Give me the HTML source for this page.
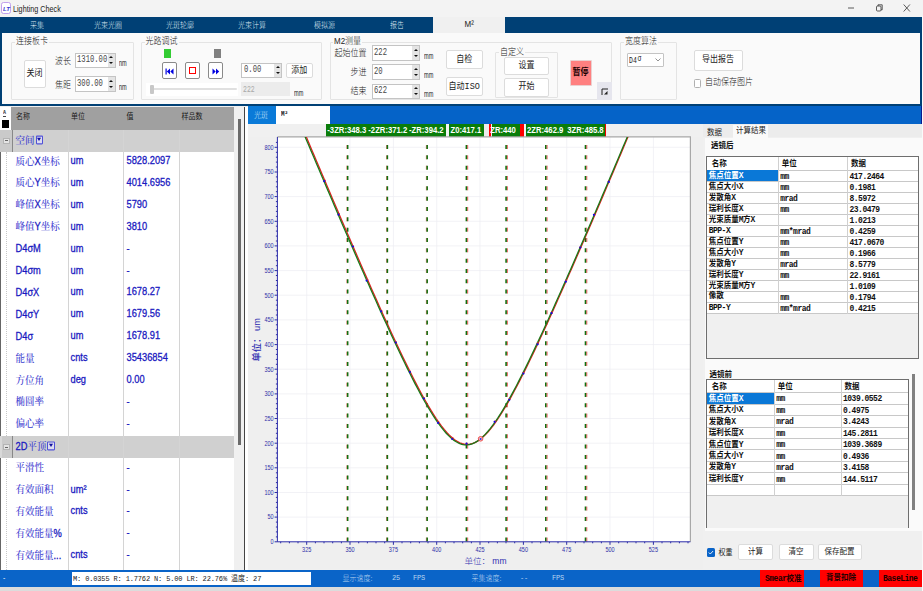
<!DOCTYPE html>
<html><head><meta charset="utf-8">
<style>
*{box-sizing:border-box;margin:0;padding:0}
html,body{width:923px;height:591px;overflow:hidden;background:#f0f0f0}
body{position:relative;font-family:"Liberation Sans","Noto Sans CJK SC",sans-serif;font-size:8px;color:#222;line-height:1;font-weight:300}
.a{position:absolute}
.t{position:absolute;white-space:nowrap;line-height:1;transform:scaleY(1.12);transform-origin:0 50%}
#title{left:0;top:0;width:923px;height:17px;background:#f3f3f3}
#menu{left:0;top:16.500px;width:922px;height:17px;background:#004075}
#menu .t{color:#dfe8f2;font-size:7px;top:5px}
#tool{left:0;top:33px;width:922px;height:73.200px;background:#fafafa;border:2px solid #004075;border-top:none;border-bottom-width:2.200px}
.gb{position:absolute;border:1px solid #e4e4e4;border-radius:1px}
.gl{position:absolute;white-space:nowrap;font-size:8px;background:#fafafa;color:#222;line-height:1;padding:0 1px}
.btn{position:absolute;border:1px solid #dcdcdc;border-radius:2px;background:#fff;text-align:center;font-size:8px;color:#222;white-space:nowrap}
.sp{position:absolute;border:1px solid #c4c4c4;background:#fff;font-family:"Liberation Mono",monospace;font-size:7.6px;color:#222;white-space:nowrap}
.sp span{position:absolute;left:1.500px;top:1.500px;font-size:10px;transform:scaleX(0.72);transform-origin:0 0;color:#484848}
.sp i{position:absolute;right:0;top:0;bottom:0;width:7px;background:#e4e4e4}
.sp i:before{content:"";position:absolute;left:1.500px;top:2.800px;border:2px solid transparent;border-bottom:2.800px solid #111;border-top:none}
.sp i:after{content:"";position:absolute;left:1.500px;bottom:2.800px;border:2px solid transparent;border-top:2.800px solid #111;border-bottom:none}
.u{position:absolute;font-family:"Liberation Mono",monospace;font-size:9.500px;color:#222;transform:scaleX(0.68);transform-origin:0 0;line-height:1;white-space:nowrap}

.hd{font-size:7px;color:#181818;font-weight:400}
.cn{font-family:"Liberation Sans","Noto Serif CJK SC",serif;font-size:9.500px;color:#3c3cd0;font-weight:500}
.cn .en2{font-family:"Liberation Sans",sans-serif;font-size:9.300px;color:#1818c0;font-weight:400;-webkit-text-stroke:0.250px #1818c0}
.en{font-family:"Liberation Sans",sans-serif;font-size:9.300px;color:#1818c0;font-weight:400;-webkit-text-stroke:0.250px #1818c0}
.dd{display:inline-block;width:7.700px;height:8.500px;border:1px solid #5050d8;border-radius:1px;margin-left:1px;position:relative;top:0.500px;background:#dcdcf0}
.dd:after{content:"";position:absolute;left:0.800px;top:1.800px;border:2px solid transparent;border-top:3.200px solid #1010a0;border-bottom:none}
.zl{font-family:"Liberation Sans",sans-serif;font-weight:bold;font-size:7.700px;color:#fff}
.rb{font-weight:bold;color:#111;font-family:"Liberation Sans","Noto Sans CJK SC",sans-serif}
.rc{font-size:7.500px;font-weight:bold;font-family:"Liberation Mono","Noto Sans CJK SC",sans-serif}
.rl{font-family:"Liberation Mono",monospace;font-size:8px;letter-spacing:-0.500px;font-weight:bold}
.rm{font-family:"Liberation Mono",monospace;font-size:8px;letter-spacing:-0.500px;font-weight:bold;color:#111}
.st{font-family:"Liberation Mono",monospace;font-size:7px;letter-spacing:-0.150px;font-weight:400}
.sc{font-size:7px;color:#b8d4f0}
.sr{font-size:7.500px;font-weight:bold;color:#200;font-family:"Liberation Mono","Noto Sans CJK SC",sans-serif}
.btn b{display:inline-block;font-weight:normal;transform:scaleY(1.12)}
.gl{transform:scaleY(1.12);transform-origin:0 50%}
.un{position:absolute;font-family:"Liberation Sans",sans-serif;font-size:9px;color:#222;transform:scaleX(0.62);transform-origin:0 0;line-height:1;white-space:nowrap}
</style></head><body>
<div id="title" class="a">
 <svg class="a" style="left:1px;top:2px" width="10" height="12" viewBox="0 0 10 12"><rect x="0.5" y="0.5" width="9" height="11" rx="2" fill="#fff" stroke="#b48ae8" stroke-width="0.8"/><text x="2" y="8.5" font-size="6" font-style="italic" font-weight="bold" fill="#3a3ad0" font-family="Liberation Sans, sans-serif">LT</text></svg>
 <div class="t" style="left:13px;top:4.500px;font-size:8.500px;color:#222;transform:scaleX(0.85);transform-origin:0 0">Lighting Check</div>
 <svg class="a" style="left:840px;top:0" width="83" height="17" viewBox="0 0 83 17"><g stroke="#333" stroke-width="0.8" fill="none"><path d="M8 8h6"/><rect x="36.5" y="6" width="4.5" height="5" rx="1"/><path d="M38 6v-1.2h4.2v5h-1.2"/><path d="M63.700 4.500l6.200 7M69.900 4.500l-6.200 7"/></g></svg>
</div>
<div id="menu" class="a">
 <div class="t" style="left:30px">采集</div>
 <div class="t" style="left:94px">光束光圈</div>
 <div class="t" style="left:166px">光斑轮廓</div>
 <div class="t" style="left:238px">光束计算</div>
 <div class="t" style="left:314px">模拟源</div>
 <div class="t" style="left:390px">报告</div>
 <div class="a" style="left:433px;top:0.500px;width:72px;height:16.500px;background:#f0f0f0"></div>
 <div class="t" style="left:464.500px;top:4.500px;color:#222;font-size:8px;font-weight:400">M²</div>
</div>
<div id="tool" class="a"></div>


<!-- TOOLBAR -->
<div class="gb" style="left:11px;top:41.500px;width:122.500px;height:58px"></div>
<div class="gl" style="left:15px;top:37.8px">连接板卡</div>
<div class="btn" style="left:23.500px;top:59.500px;width:22px;height:28px;line-height:26px"><b>关闭</b></div>
<div class="t" style="left:55px;top:58px;font-size:8px">波长</div>
<div class="t" style="left:55px;top:82px;font-size:8px">焦距</div>
<div class="sp" style="left:74.500px;top:52.500px;width:41px;height:15.500px"><span>1310.00</span><i></i></div>
<div class="sp" style="left:74.500px;top:76px;width:41px;height:15.500px"><span>300.00</span><i></i></div>
<div class="un" style="left:119px;top:58.5px">nm</div>
<div class="un" style="left:119px;top:82.5px">nm</div>

<div class="gb" style="left:141px;top:42px;width:180.500px;height:57.500px"></div>
<div class="gl" style="left:144.500px;top:37.8px">光路调试</div>
<div class="a" style="left:163.500px;top:49px;width:7.500px;height:9px;background:#33cc33"></div>
<div class="a" style="left:213.500px;top:49px;width:7.500px;height:9px;background:#808080"></div>
<div class="btn" style="left:161.500px;top:61.500px;width:15.500px;height:17.500px;border-color:#8a8a8a"><svg class="a" style="left:2.500px;top:5px" width="9" height="7" viewBox="0 0 9 7"><path d="M0.500 0.500h1.200v6h-1.200zM5 0.500v6l-3.200-3zM8.500 0.500v6l-3.200-3z" fill="#0000e0"/></svg></div>
<div class="btn" style="left:184.500px;top:61.500px;width:15.500px;height:17.500px;border-color:#8a8a8a"><div class="a" style="left:3.500px;top:4.500px;width:7px;height:7px;border:1px solid #f00"></div></div>
<div class="btn" style="left:207.500px;top:61.500px;width:15.500px;height:17.500px;border-color:#8a8a8a"><svg class="a" style="left:3.500px;top:5px" width="8" height="7" viewBox="0 0 8 7"><path d="M0.500 0.500v6l3.200-3zM4 0.500v6l3.200-3z" fill="#0000e0"/></svg></div>
<div class="sp" style="left:241px;top:62.500px;width:41px;height:15px"><span>0.00</span><i></i></div>
<div class="btn" style="left:285.500px;top:62.500px;width:27.500px;height:15px;line-height:13px"><b>添加</b></div>
<div class="a" style="left:146px;top:83px;width:92px;height:13px;background:#fff"></div>
<div class="a" style="left:150px;top:88px;width:87px;height:2px;background:#e0e0e0;border-radius:1px"></div>
<div class="a" style="left:150px;top:85px;width:4px;height:9px;background:#c8c8c8;border-radius:1px"></div>
<div class="a" style="left:241px;top:81.500px;width:49px;height:14.500px;background:#ececec"></div>
<div class="u" style="left:243px;top:85.0px;color:#a8a8a8">222</div>
<div class="un" style="left:294px;top:88.5px">mm</div>

<div class="gb" style="left:330px;top:41.500px;width:282px;height:58px"></div>
<div class="gl" style="left:333px;top:37.8px">M2测量</div>
<div class="t" style="left:334.500px;top:49.500px;font-size:8px">起始位置</div>
<div class="t" style="left:350.500px;top:68.500px;font-size:8px">步进</div>
<div class="t" style="left:350.500px;top:87.500px;font-size:8px">结束</div>
<div class="sp" style="left:371.500px;top:45px;width:48.500px;height:15.500px"><span>222</span><i></i></div>
<div class="sp" style="left:371.500px;top:64px;width:48.500px;height:15.500px"><span>20</span><i></i></div>
<div class="sp" style="left:371.500px;top:83.500px;width:48.500px;height:15.500px"><span>622</span><i></i></div>
<div class="un" style="left:424px;top:51.5px">mm</div>
<div class="un" style="left:424px;top:70.5px">mm</div>
<div class="un" style="left:424px;top:89.5px">mm</div>
<div class="btn" style="left:445.500px;top:49.500px;width:37.500px;height:19px;line-height:17px"><b>自检</b></div>
<div class="btn" style="left:445.500px;top:76.500px;width:37.500px;height:19px;line-height:17px"><b>自动</b><span style="font-family:'Liberation Mono',monospace;font-size:8.500px">ISO</span></div>
<div class="gb" style="left:494.500px;top:51.500px;width:63.500px;height:46px"></div>
<div class="gl" style="left:499px;top:48.8px">自定义</div>
<div class="btn" style="left:504px;top:56.500px;width:45px;height:18.500px;line-height:16.500px"><b>设置</b></div>
<div class="btn" style="left:504px;top:78px;width:45px;height:18.500px;line-height:16.500px"><b>开始</b></div>
<div class="a" style="left:569.500px;top:60px;width:22.500px;height:26px;background:#ff8080;border:1px solid #ead0d0;border-radius:1px"></div>
<div class="t" style="left:572.500px;top:69px;font-size:8px;font-weight:bold;color:#1a0000">暂停</div>
<div class="a" style="left:596.500px;top:82px;width:15px;height:17.500px;background:#e6e6ee"></div>
<svg class="a" style="left:601px;top:87.500px" width="8" height="8" viewBox="0 0 8 8"><path d="M1 7V1h6" fill="none" stroke="#222" stroke-width="1"/><path d="M6.500 6.500h-3.500l3.500-3.500z" fill="#222"/></svg>

<div class="gb" style="left:620px;top:42px;width:56.500px;height:57.500px"></div>
<div class="gl" style="left:624px;top:37.8px">宽度算法</div>
<div class="a" style="left:627px;top:52.500px;width:37px;height:14.500px;border:1px solid #c4c4c4;background:#fff;border-radius:1px"></div>
<div class="u" style="left:629px;top:55px">D4<span style="font-family:'Liberation Sans',sans-serif;position:relative;top:-2px;left:1px">σ</span></div>
<svg class="a" style="left:655px;top:58px" width="6" height="4" viewBox="0 0 6 4"><path d="M0.500 0.500l2.500 2.500l2.500-2.500" fill="none" stroke="#777" stroke-width="0.800"/></svg>
<div class="btn" style="left:693.500px;top:50px;width:49px;height:20.500px;line-height:18.500px"><b>导出报告</b></div>
<div class="a" style="left:693.500px;top:79px;width:7.500px;height:8.500px;border:1px solid #b0b0b0;border-radius:1.500px;background:#fff"></div>
<div class="t" style="left:705px;top:79px;font-size:8px">自动保存图片</div>

<!-- LEFT PANEL -->
<div class="a" style="left:0;top:106.500px;width:234px;height:463px;background:#fff;overflow:hidden" id="left">
<div class="a" style="left:11px;top:0;width:223px;height:23.500px;background:#a0a0a0"></div>
<div class="t hd" style="left:16px;top:6px">名称</div>
<div class="t hd" style="left:71px;top:6px">单位</div>
<div class="t hd" style="left:126.5px;top:6px">值</div>
<div class="t hd" style="left:181.5px;top:6px">样品数</div>
<div class="t" style="left:3px;top:4px;font-size:5px;color:#333;font-family:'Liberation Mono',monospace;font-weight:bold">A</div><div class="a" style="left:2.800px;top:9.300px;width:3.600px;height:1px;background:#444"></div>
<div class="a" style="left:2px;top:13.500px;width:7px;height:8px;background:#000"></div>
<div class="a" style="left:6px;top:45px;width:0;height:420px;border-left:1px dotted #c8c8c8"></div>
<div class="a" style="left:11px;top:23.5px;width:223px;height:21.5px;background:#d0d0d0"></div>
<div class="a" style="left:0;top:23.5px;width:12.500px;height:21.5px;background:#cacaca;border-right:1px solid #888"></div>
<div class="a" style="left:3px;top:31.0px;width:6.500px;height:6.500px;border:1px solid #b4b4b4;background:#e4e4e4"></div><div class="a" style="left:5px;top:33.8px;width:2.500px;height:1px;background:#666"></div>
<div class="t cn" style="left:15.500px;top:28.5px">空间<span class="dd"></span></div>
<div class="t cn" style="left:15.500px;top:50.00px">质心<span class="en2">X</span>坐标</div>
<div class="t en" style="left:70.500px;top:50.50px">um</div>
<div class="t en" style="left:126.500px;top:50.50px">5828.2097</div>
<div class="t cn" style="left:15.500px;top:71.90px">质心<span class="en2">Y</span>坐标</div>
<div class="t en" style="left:70.500px;top:72.40px">um</div>
<div class="t en" style="left:126.500px;top:72.40px">4014.6956</div>
<div class="t cn" style="left:15.500px;top:93.80px">峰值<span class="en2">X</span>坐标</div>
<div class="t en" style="left:70.500px;top:94.30px">um</div>
<div class="t en" style="left:126.500px;top:94.30px">5790</div>
<div class="t cn" style="left:15.500px;top:115.70px">峰值<span class="en2">Y</span>坐标</div>
<div class="t en" style="left:70.500px;top:116.20px">um</div>
<div class="t en" style="left:126.500px;top:116.20px">3810</div>
<div class="t cn" style="left:15.500px;top:137.60px"><span class="en2">D4σM</span></div>
<div class="t en" style="left:70.500px;top:138.10px">um</div>
<div class="t en" style="left:126.500px;top:138.10px">-</div>
<div class="t cn" style="left:15.500px;top:159.50px"><span class="en2">D4σm</span></div>
<div class="t en" style="left:70.500px;top:160.00px">um</div>
<div class="t en" style="left:126.500px;top:160.00px">-</div>
<div class="t cn" style="left:15.500px;top:181.40px"><span class="en2">D4σX</span></div>
<div class="t en" style="left:70.500px;top:181.90px">um</div>
<div class="t en" style="left:126.500px;top:181.90px">1678.27</div>
<div class="t cn" style="left:15.500px;top:203.30px"><span class="en2">D4σY</span></div>
<div class="t en" style="left:70.500px;top:203.80px">um</div>
<div class="t en" style="left:126.500px;top:203.80px">1679.56</div>
<div class="t cn" style="left:15.500px;top:225.20px"><span class="en2">D4σ</span></div>
<div class="t en" style="left:70.500px;top:225.70px">um</div>
<div class="t en" style="left:126.500px;top:225.70px">1678.91</div>
<div class="t cn" style="left:15.500px;top:247.10px">能量</div>
<div class="t en" style="left:70.500px;top:247.60px">cnts</div>
<div class="t en" style="left:126.500px;top:247.60px">35436854</div>
<div class="t cn" style="left:15.500px;top:269.00px">方位角</div>
<div class="t en" style="left:70.500px;top:269.50px">deg</div>
<div class="t en" style="left:126.500px;top:269.50px">0.00</div>
<div class="t cn" style="left:15.500px;top:290.90px">椭圆率</div>
<div class="t en" style="left:126.500px;top:291.40px">-</div>
<div class="t cn" style="left:15.500px;top:312.80px">偏心率</div>
<div class="t en" style="left:126.500px;top:313.30px">-</div>
<div class="a" style="left:11px;top:329.7px;width:223px;height:21.9px;background:#d0d0d0"></div>
<div class="a" style="left:0;top:329.7px;width:12.500px;height:21.9px;background:#cacaca;border-right:1px solid #888"></div>
<div class="a" style="left:3px;top:337.2px;width:6.500px;height:6.500px;border:1px solid #b4b4b4;background:#e4e4e4"></div><div class="a" style="left:5px;top:340.0px;width:2.500px;height:1px;background:#666"></div>
<div class="t cn" style="left:15.500px;top:334.7px"><span class="en2">2D</span>平顶<span class="dd"></span></div>
<div class="t cn" style="left:15.500px;top:356.60px">平滑性</div>
<div class="t en" style="left:126.500px;top:357.10px">-</div>
<div class="t cn" style="left:15.500px;top:378.50px">有效面积</div>
<div class="t en" style="left:70.500px;top:379.00px">um²</div>
<div class="t en" style="left:126.500px;top:379.00px">-</div>
<div class="t cn" style="left:15.500px;top:400.40px">有效能量</div>
<div class="t en" style="left:70.500px;top:400.90px">cnts</div>
<div class="t en" style="left:126.500px;top:400.90px">-</div>
<div class="t cn" style="left:15.500px;top:422.30px">有效能量<span class="en2">%</span></div>
<div class="t en" style="left:126.500px;top:422.80px">-</div>
<div class="t cn" style="left:15.500px;top:444.20px">有效能量<span class="en2">...</span></div>
<div class="t en" style="left:70.500px;top:444.70px">cnts</div>
<div class="t en" style="left:126.500px;top:444.70px">-</div>
<div class="a" style="left:67.9px;top:23.5px;width:1px;height:440px;background:#d4d4d4"></div>
<div class="a" style="left:123.2px;top:23.5px;width:1px;height:440px;background:#d4d4d4"></div>
<div class="a" style="left:179px;top:23.5px;width:1px;height:440px;background:#d4d4d4"></div>
<div class="a" style="left:0;top:45px;width:1px;height:420px;background:#666"></div>
<div class="a" style="left:0;top:329.7px;width:1.500px;height:21.900px;background:#d8d8d8"></div>
</div>
<div class="a" style="left:234px;top:106.500px;width:10px;height:463px;background:#f0f0f0"></div>
<div class="a" style="left:238.200px;top:119px;width:3px;height:325.600px;background:#6a6a6a"></div>
<div class="a" style="left:244px;top:106.500px;width:1px;height:463px;background:#444"></div>
<div class="a" style="left:245px;top:106.500px;width:3px;height:463px;background:#fff"></div>

<!-- CENTER -->
<div class="a" style="left:248px;top:105.800px;width:674px;height:18px;background:#0563c8"></div>
<div class="a" style="left:248px;top:105.800px;width:28px;height:18px;background:#0a7ad8"></div>
<div class="t" style="left:254px;top:111.500px;font-size:7px;color:#cfe4f8">光斑</div>
<div class="a" style="left:275.700px;top:105.800px;width:54.500px;height:18px;background:#fff"></div>
<div class="t" style="left:281px;top:112px;font-size:6px;color:#222;font-family:'Liberation Mono',monospace;font-weight:bold">M²</div>
<div class="a" style="left:248px;top:123.800px;width:456px;height:445.700px;background:#efefef"></div>
<div class="a" style="left:248px;top:123.800px;width:456px;height:13px;background:#f0f0f0"></div>
<div class="a" style="left:325.9px;top:124px;width:120.1px;height:12.500px;background:#0a7d0a"></div>
<div class="a" style="left:446px;top:124px;width:3.2px;height:12.500px;background:#f4f4f4"></div>
<div class="a" style="left:449.2px;top:124px;width:35.0px;height:12.500px;background:#0a7d0a"></div>
<div class="a" style="left:484.2px;top:124px;width:5.1px;height:12.500px;background:#ececec"></div>
<div class="a" style="left:489.3px;top:124px;width:2.2px;height:12.500px;background:#f00"></div>
<div class="a" style="left:491.5px;top:124px;width:28.6px;height:12.500px;background:#0a7d0a"></div>
<div class="a" style="left:520.1px;top:124px;width:3.6px;height:12.500px;background:#f00"></div>
<div class="a" style="left:523.7px;top:124px;width:1.8px;height:12.500px;background:#f4f4f4"></div>
<div class="a" style="left:525.5px;top:124px;width:79.6px;height:12.500px;background:#0a7d0a"></div>
<div class="a" style="left:605.1px;top:124px;width:0.9px;height:12.500px;background:#e00"></div>
<div class="t zl" style="left:327.3px;top:126.500px">-3ZR:348.3</div>
<div class="t zl" style="left:368.3px;top:126.500px">-2ZR:371.2</div>
<div class="t zl" style="left:409px;top:126.500px">-ZR:394.2</div>
<div class="t zl" style="left:450.5px;top:126.500px">Z0:417.1</div>
<div class="t zl" style="left:490.2px;top:126.500px">ZR:440</div>
<div class="t zl" style="left:527px;top:126.500px">2ZR:462.9</div>
<div class="t zl" style="left:567.3px;top:126.500px">3ZR:485.8</div>
<svg class="a" style="left:248px;top:124px" width="456" height="446" viewBox="248 124 456 446" font-family="Liberation Sans, sans-serif"><rect x="277.4" y="137" width="413.0" height="404.8" fill="#fff"/><path d="M277.4 517.1H690.4M277.4 492.5H690.4M277.4 467.8H690.4M277.4 443.2H690.4M277.4 418.5H690.4M277.4 393.9H690.4M277.4 369.2H690.4M277.4 344.6H690.4M277.4 319.9H690.4M277.4 295.2H690.4M277.4 270.6H690.4M277.4 245.9H690.4M277.4 221.3H690.4M277.4 196.6H690.4M277.4 172.0H690.4M277.4 147.3H690.4M306.7 137V541.8M350.0 137V541.8M393.4 137V541.8M436.7 137V541.8M480.0 137V541.8M523.4 137V541.8M566.7 137V541.8M610.0 137V541.8M653.4 137V541.8" stroke="#ededf2" stroke-width="0.7" fill="none"/><path d="M277.4 136.8H690.4V541.8" stroke="#a8a8a8" stroke-width="1.200" fill="none"/><clipPath id="cp"><rect x="277.4" y="137" width="413.0" height="404.8"/></clipPath><path d="M346.9 145V541.8" stroke="#d04030" stroke-width="0.700" stroke-dasharray="4 6.330" fill="none"/><path d="M347.7 145V541.8" stroke="#107010" stroke-width="1.500" stroke-dasharray="4 6.330" fill="none"/><path d="M386.6 145V541.8" stroke="#d04030" stroke-width="0.700" stroke-dasharray="4 6.330" fill="none"/><path d="M387.4 145V541.8" stroke="#107010" stroke-width="1.500" stroke-dasharray="4 6.330" fill="none"/><path d="M426.4 145V541.8" stroke="#d04030" stroke-width="0.700" stroke-dasharray="4 6.330" fill="none"/><path d="M427.2 145V541.8" stroke="#107010" stroke-width="1.500" stroke-dasharray="4 6.330" fill="none"/><path d="M466.4 145V541.8" stroke="#107010" stroke-width="1.600" stroke-dasharray="4 6.330" fill="none"/><path d="M467.7 145V541.8" stroke="#e02020" stroke-width="0.700" stroke-dasharray="4 6.330" fill="none"/><path d="M506.1 145V541.8" stroke="#107010" stroke-width="1.600" stroke-dasharray="4 6.330" fill="none"/><path d="M507.4 145V541.8" stroke="#e02020" stroke-width="0.700" stroke-dasharray="4 6.330" fill="none"/><path d="M545.8 145V541.8" stroke="#107010" stroke-width="1.600" stroke-dasharray="4 6.330" fill="none"/><path d="M547.1 145V541.8" stroke="#e02020" stroke-width="0.700" stroke-dasharray="4 6.330" fill="none"/><path d="M585.5 145V541.8" stroke="#107010" stroke-width="1.600" stroke-dasharray="4 6.330" fill="none"/><path d="M586.8 145V541.8" stroke="#e02020" stroke-width="0.700" stroke-dasharray="4 6.330" fill="none"/><g clip-path="url(#cp)" fill="none"><path d="M277.2 68.6L279.8 74.8L282.4 81.0L285.0 87.2L287.6 93.4L290.2 99.6L292.8 105.8L295.4 112.0L298.0 118.2L300.6 124.4L303.2 130.6L305.8 136.8L308.4 142.9L311.0 149.1L313.6 155.2L316.2 161.4L318.8 167.5L321.4 173.7L324.0 179.8L326.6 185.9L329.2 192.0L331.8 198.1L334.4 204.2L337.0 210.3L339.6 216.4L342.2 222.4L344.8 228.5L347.4 234.5L350.0 240.5L352.6 246.5L355.2 252.5L357.8 258.5L360.4 264.5L363.0 270.4L365.6 276.3L368.2 282.2L370.8 288.1L373.4 293.9L376.0 299.8L378.6 305.6L381.2 311.4L383.8 317.1L386.4 322.8L389.0 328.5L391.6 334.1L394.2 339.7L396.8 345.2L399.4 350.7L402.0 356.2L404.6 361.5L407.2 366.8L409.8 372.1L412.4 377.2L415.0 382.3L417.6 387.3L420.2 392.2L422.8 396.9L425.4 401.5L428.0 406.0L430.6 410.4L433.2 414.5L435.8 418.5L438.4 422.3L441.0 425.8L443.6 429.1L446.2 432.2L448.8 434.9L451.4 437.3L454.0 439.4L456.6 441.1L459.2 442.5L461.8 443.4L464.4 444.0L467.0 444.1L469.6 443.8L472.2 443.1L474.8 442.1L477.4 440.6L480.0 438.7L482.6 436.5L485.2 434.0L487.8 431.2L490.4 428.0L493.0 424.7L495.6 421.0L498.2 417.2L500.8 413.1L503.4 408.9L506.0 404.5L508.6 400.0L511.2 395.3L513.8 390.5L516.4 385.6L519.0 380.6L521.6 375.5L524.2 370.3L526.8 365.1L529.4 359.7L532.0 354.3L534.6 348.9L537.2 343.4L539.8 337.8L542.4 332.2L545.0 326.6L547.6 320.9L550.2 315.2L552.8 309.4L555.4 303.6L558.0 297.8L560.6 292.0L563.2 286.1L565.8 280.2L568.4 274.3L571.0 268.4L573.6 262.4L576.2 256.5L578.8 250.5L581.4 244.5L584.0 238.5L586.6 232.5L589.2 226.4L591.8 220.4L594.4 214.3L597.0 208.2L599.6 202.1L602.2 196.1L604.8 190.0L607.4 183.8L610.0 177.7L612.6 171.6L615.2 165.5L617.8 159.3L620.4 153.2L623.0 147.0L625.6 140.8L628.2 134.7L630.8 128.5L633.4 122.3L636.0 116.1L638.6 109.9L641.2 103.7L643.8 97.5L646.4 91.3L649.0 85.1L651.6 78.9L654.2 72.7L656.8 66.5L659.4 60.3L662.0 54.0L664.6 47.8L667.2 41.6L669.8 35.3L672.4 29.1L675.0 22.9L677.6 16.6L680.2 10.4L682.8 4.1L685.4 -2.1L688.0 -8.4L690.6 -14.7" stroke="#e02020" stroke-width="1.300" transform="translate(0.600,0.300)"/><path d="M277.2 70.3L279.8 76.5L282.4 82.7L285.0 88.9L287.6 95.1L290.2 101.3L292.8 107.5L295.4 113.7L298.0 119.9L300.6 126.1L303.2 132.2L305.8 138.4L308.4 144.5L311.0 150.7L313.6 156.8L316.2 163.0L318.8 169.1L321.4 175.2L324.0 181.3L326.6 187.5L329.2 193.6L331.8 199.6L334.4 205.7L337.0 211.8L339.6 217.9L342.2 223.9L344.8 229.9L347.4 236.0L350.0 242.0L352.6 248.0L355.2 254.0L357.8 259.9L360.4 265.9L363.0 271.8L365.6 277.7L368.2 283.6L370.8 289.5L373.4 295.3L376.0 301.1L378.6 306.9L381.2 312.7L383.8 318.4L386.4 324.1L389.0 329.8L391.6 335.4L394.2 341.0L396.8 346.5L399.4 352.0L402.0 357.4L404.6 362.8L407.2 368.1L409.8 373.3L412.4 378.5L415.0 383.6L417.6 388.5L420.2 393.4L422.8 398.1L425.4 402.7L428.0 407.2L430.6 411.5L433.2 415.7L435.8 419.6L438.4 423.4L441.0 426.9L443.6 430.2L446.2 433.2L448.8 435.9L451.4 438.3L454.0 440.4L456.6 442.0L459.2 443.3L461.8 444.3L464.4 444.8L467.0 444.8L469.6 444.5L472.2 443.8L474.8 442.6L477.4 441.1L480.0 439.2L482.6 437.0L485.2 434.4L487.8 431.5L490.4 428.3L493.0 424.9L495.6 421.3L498.2 417.4L500.8 413.3L503.4 409.1L506.0 404.7L508.6 400.1L511.2 395.4L513.8 390.6L516.4 385.7L519.0 380.6L521.6 375.5L524.2 370.3L526.8 365.1L529.4 359.7L532.0 354.3L534.6 348.9L537.2 343.3L539.8 337.8L542.4 332.2L545.0 326.5L547.6 320.9L550.2 315.1L552.8 309.4L555.4 303.6L558.0 297.8L560.6 292.0L563.2 286.1L565.8 280.2L568.4 274.3L571.0 268.4L573.6 262.4L576.2 256.5L578.8 250.5L581.4 244.5L584.0 238.5L586.6 232.5L589.2 226.5L591.8 220.4L594.4 214.4L597.0 208.3L599.6 202.2L602.2 196.1L604.8 190.0L607.4 183.9L610.0 177.8L612.6 171.7L615.2 165.6L617.8 159.4L620.4 153.3L623.0 147.1L625.6 141.0L628.2 134.8L630.8 128.7L633.4 122.5L636.0 116.3L638.6 110.1L641.2 103.9L643.8 97.8L646.4 91.6L649.0 85.4L651.6 79.2L654.2 73.0L656.8 66.7L659.4 60.5L662.0 54.3L664.6 48.1L667.2 41.9L669.8 35.6L672.4 29.4L675.0 23.2L677.6 16.9L680.2 10.7L682.8 4.5L685.4 -1.8L688.0 -8.0L690.6 -14.3" stroke="#1a7a1a" stroke-width="1.300"/><circle cx="324.7" cy="180.7" r="1.100" fill="#e03030" stroke="none"/><circle cx="324.2" cy="181.2" r="1.100" fill="#1010e0" stroke="none"/><circle cx="338.9" cy="214.1" r="1.100" fill="#e03030" stroke="none"/><circle cx="338.5" cy="214.7" r="1.100" fill="#1010e0" stroke="none"/><circle cx="353.1" cy="246.5" r="1.100" fill="#e03030" stroke="none"/><circle cx="352.9" cy="246.5" r="1.100" fill="#1010e0" stroke="none"/><circle cx="367.3" cy="279.8" r="1.100" fill="#e03030" stroke="none"/><circle cx="366.6" cy="280.6" r="1.100" fill="#1010e0" stroke="none"/><circle cx="381.5" cy="311.0" r="1.100" fill="#e03030" stroke="none"/><circle cx="381.0" cy="311.3" r="1.100" fill="#1010e0" stroke="none"/><circle cx="395.7" cy="342.2" r="1.100" fill="#e03030" stroke="none"/><circle cx="395.8" cy="342.6" r="1.100" fill="#1010e0" stroke="none"/><circle cx="409.9" cy="371.6" r="1.100" fill="#e03030" stroke="none"/><circle cx="409.9" cy="372.1" r="1.100" fill="#1010e0" stroke="none"/><circle cx="424.1" cy="398.3" r="1.100" fill="#e03030" stroke="none"/><circle cx="423.9" cy="398.5" r="1.100" fill="#1010e0" stroke="none"/><circle cx="438.3" cy="422.0" r="1.100" fill="#e03030" stroke="none"/><circle cx="438.1" cy="422.9" r="1.100" fill="#1010e0" stroke="none"/><circle cx="452.5" cy="438.2" r="1.100" fill="#e03030" stroke="none"/><circle cx="452.2" cy="439.0" r="1.100" fill="#1010e0" stroke="none"/><circle cx="466.7" cy="443.7" r="1.100" fill="#e03030" stroke="none"/><circle cx="466.5" cy="443.7" r="1.100" fill="#1010e0" stroke="none"/><circle cx="480.9" cy="438.4" r="1.100" fill="#e03030" stroke="none"/><circle cx="480.8" cy="439.0" r="1.100" fill="#1010e0" stroke="none"/><circle cx="495.1" cy="421.7" r="1.100" fill="#e03030" stroke="none"/><circle cx="494.6" cy="421.8" r="1.100" fill="#1010e0" stroke="none"/><circle cx="509.3" cy="399.3" r="1.100" fill="#e03030" stroke="none"/><circle cx="509.3" cy="399.8" r="1.100" fill="#1010e0" stroke="none"/><circle cx="523.5" cy="372.8" r="1.100" fill="#e03030" stroke="none"/><circle cx="523.4" cy="373.6" r="1.100" fill="#1010e0" stroke="none"/><circle cx="537.7" cy="343.4" r="1.100" fill="#e03030" stroke="none"/><circle cx="537.6" cy="344.3" r="1.100" fill="#1010e0" stroke="none"/><circle cx="551.9" cy="312.4" r="1.100" fill="#e03030" stroke="none"/><circle cx="551.5" cy="313.2" r="1.100" fill="#1010e0" stroke="none"/><circle cx="566.1" cy="280.7" r="1.100" fill="#e03030" stroke="none"/><circle cx="565.8" cy="281.7" r="1.100" fill="#1010e0" stroke="none"/><circle cx="580.3" cy="247.4" r="1.100" fill="#e03030" stroke="none"/><circle cx="580.3" cy="247.5" r="1.100" fill="#1010e0" stroke="none"/><circle cx="594.5" cy="214.6" r="1.100" fill="#e03030" stroke="none"/><circle cx="593.9" cy="214.8" r="1.100" fill="#1010e0" stroke="none"/><circle cx="608.7" cy="181.5" r="1.100" fill="#e03030" stroke="none"/><circle cx="608.8" cy="181.9" r="1.100" fill="#1010e0" stroke="none"/><circle cx="480.600" cy="438.800" r="2.300" fill="#f8c0c0" stroke="#e84040" stroke-width="0.900"/><circle cx="480.600" cy="439" r="1" fill="#3030e0"/></g><path d="M277.4 137V541.8H690.4M274.59999999999997 541.8H277.4M274.59999999999997 517.1H277.4M274.59999999999997 492.5H277.4M274.59999999999997 467.8H277.4M274.59999999999997 443.2H277.4M274.59999999999997 418.5H277.4M274.59999999999997 393.9H277.4M274.59999999999997 369.2H277.4M274.59999999999997 344.6H277.4M274.59999999999997 319.9H277.4M274.59999999999997 295.2H277.4M274.59999999999997 270.6H277.4M274.59999999999997 245.9H277.4M274.59999999999997 221.3H277.4M274.59999999999997 196.6H277.4M274.59999999999997 172.0H277.4M274.59999999999997 147.3H277.4M275.9 536.9H277.4M275.9 531.9H277.4M275.9 527.0H277.4M275.9 522.1H277.4M275.9 512.2H277.4M275.9 507.3H277.4M275.9 502.4H277.4M275.9 497.4H277.4M275.9 487.6H277.4M275.9 482.6H277.4M275.9 477.7H277.4M275.9 472.8H277.4M275.9 462.9H277.4M275.9 458.0H277.4M275.9 453.0H277.4M275.9 448.1H277.4M275.9 438.2H277.4M275.9 433.3H277.4M275.9 428.4H277.4M275.9 423.5H277.4M275.9 413.6H277.4M275.9 408.7H277.4M275.9 403.7H277.4M275.9 398.8H277.4M275.9 388.9H277.4M275.9 384.0H277.4M275.9 379.1H277.4M275.9 374.1H277.4M275.9 364.3H277.4M275.9 359.4H277.4M275.9 354.4H277.4M275.9 349.5H277.4M275.9 339.6H277.4M275.9 334.7H277.4M275.9 329.8H277.4M275.9 324.8H277.4M275.9 315.0H277.4M275.9 310.0H277.4M275.9 305.1H277.4M275.9 300.2H277.4M275.9 290.3H277.4M275.9 285.4H277.4M275.9 280.5H277.4M275.9 275.5H277.4M275.9 265.7H277.4M275.9 260.7H277.4M275.9 255.8H277.4M275.9 250.9H277.4M275.9 241.0H277.4M275.9 236.1H277.4M275.9 231.1H277.4M275.9 226.2H277.4M275.9 216.4H277.4M275.9 211.4H277.4M275.9 206.5H277.4M275.9 201.6H277.4M275.9 191.7H277.4M275.9 186.8H277.4M275.9 181.8H277.4M275.9 176.9H277.4M275.9 167.0H277.4M275.9 162.1H277.4M275.9 157.2H277.4M275.9 152.3H277.4M275.9 142.4H277.4M306.7 541.8v3M350.0 541.8v3M393.4 541.8v3M436.7 541.8v3M480.0 541.8v3M523.4 541.8v3M566.7 541.8v3M610.0 541.8v3M653.4 541.8v3M280.7 541.8v1.500M289.4 541.8v1.500M298.0 541.8v1.500M315.4 541.8v1.500M324.0 541.8v1.500M332.7 541.8v1.500M341.4 541.8v1.500M358.7 541.8v1.500M367.4 541.8v1.500M376.0 541.8v1.500M384.7 541.8v1.500M402.0 541.8v1.500M410.7 541.8v1.500M419.4 541.8v1.500M428.0 541.8v1.500M445.4 541.8v1.500M454.0 541.8v1.500M462.7 541.8v1.500M471.4 541.8v1.500M488.7 541.8v1.500M497.4 541.8v1.500M506.0 541.8v1.500M514.7 541.8v1.500M532.0 541.8v1.500M540.7 541.8v1.500M549.4 541.8v1.500M558.0 541.8v1.500M575.4 541.8v1.500M584.0 541.8v1.500M592.7 541.8v1.500M601.4 541.8v1.500M618.7 541.8v1.500M627.4 541.8v1.500M636.0 541.8v1.500M644.7 541.8v1.500M662.0 541.8v1.500M670.7 541.8v1.500M679.4 541.8v1.500M688.0 541.8v1.500" stroke="#2c2ca8" stroke-width="1" fill="none"/><text transform="translate(273.59999999999997,544.1) scale(0.92,1.15)" font-size="6" fill="#3030a8" text-anchor="end">0</text><text transform="translate(273.59999999999997,519.4) scale(0.92,1.15)" font-size="6" fill="#3030a8" text-anchor="end">50</text><text transform="translate(273.59999999999997,494.8) scale(0.92,1.15)" font-size="6" fill="#3030a8" text-anchor="end">100</text><text transform="translate(273.59999999999997,470.1) scale(0.92,1.15)" font-size="6" fill="#3030a8" text-anchor="end">150</text><text transform="translate(273.59999999999997,445.5) scale(0.92,1.15)" font-size="6" fill="#3030a8" text-anchor="end">200</text><text transform="translate(273.59999999999997,420.8) scale(0.92,1.15)" font-size="6" fill="#3030a8" text-anchor="end">250</text><text transform="translate(273.59999999999997,396.2) scale(0.92,1.15)" font-size="6" fill="#3030a8" text-anchor="end">300</text><text transform="translate(273.59999999999997,371.5) scale(0.92,1.15)" font-size="6" fill="#3030a8" text-anchor="end">350</text><text transform="translate(273.59999999999997,346.9) scale(0.92,1.15)" font-size="6" fill="#3030a8" text-anchor="end">400</text><text transform="translate(273.59999999999997,322.2) scale(0.92,1.15)" font-size="6" fill="#3030a8" text-anchor="end">450</text><text transform="translate(273.59999999999997,297.6) scale(0.92,1.15)" font-size="6" fill="#3030a8" text-anchor="end">500</text><text transform="translate(273.59999999999997,272.9) scale(0.92,1.15)" font-size="6" fill="#3030a8" text-anchor="end">550</text><text transform="translate(273.59999999999997,248.2) scale(0.92,1.15)" font-size="6" fill="#3030a8" text-anchor="end">600</text><text transform="translate(273.59999999999997,223.6) scale(0.92,1.15)" font-size="6" fill="#3030a8" text-anchor="end">650</text><text transform="translate(273.59999999999997,198.9) scale(0.92,1.15)" font-size="6" fill="#3030a8" text-anchor="end">700</text><text transform="translate(273.59999999999997,174.3) scale(0.92,1.15)" font-size="6" fill="#3030a8" text-anchor="end">750</text><text transform="translate(273.59999999999997,149.6) scale(0.92,1.15)" font-size="6" fill="#3030a8" text-anchor="end">800</text><text transform="translate(306.7,552.3) scale(0.92,1.15)" font-size="6" fill="#3030a8" text-anchor="middle">325</text><text transform="translate(350.0,552.3) scale(0.92,1.15)" font-size="6" fill="#3030a8" text-anchor="middle">350</text><text transform="translate(393.4,552.3) scale(0.92,1.15)" font-size="6" fill="#3030a8" text-anchor="middle">375</text><text transform="translate(436.7,552.3) scale(0.92,1.15)" font-size="6" fill="#3030a8" text-anchor="middle">400</text><text transform="translate(480.0,552.3) scale(0.92,1.15)" font-size="6" fill="#3030a8" text-anchor="middle">425</text><text transform="translate(523.4,552.3) scale(0.92,1.15)" font-size="6" fill="#3030a8" text-anchor="middle">450</text><text transform="translate(566.7,552.3) scale(0.92,1.15)" font-size="6" fill="#3030a8" text-anchor="middle">475</text><text transform="translate(610.0,552.3) scale(0.92,1.15)" font-size="6" fill="#3030a8" text-anchor="middle">500</text><text transform="translate(653.4,552.3) scale(0.92,1.15)" font-size="6" fill="#3030a8" text-anchor="middle">525</text><text x="464.500" y="563.500" font-size="8.500" fill="#3030b0" font-family="Liberation Sans, Noto Sans CJK SC, sans-serif">单位： mm</text><text transform="translate(259.500,361.500) rotate(-90)" font-size="9.300" font-weight="500" fill="#2c2cb0" font-family="Liberation Sans, Noto Sans CJK SC, sans-serif">单位： um</text></svg>

<!-- RIGHT -->
<div class="a" style="left:703px;top:123.800px;width:219.500px;height:445.700px;background:#f0f0f0"></div>
<div class="a" style="left:704.500px;top:137.500px;width:217.500px;height:393.500px;background:#fafafa"></div>
<div class="a" style="left:703px;top:123.800px;width:219.500px;height:13.700px;background:#ececec"></div>
<div class="a" style="left:732.800px;top:124.500px;width:35.500px;height:13.500px;background:#fafafa"></div>
<div class="t" style="left:707px;top:128.500px;font-size:7.500px;color:#222;font-weight:400">数据</div>
<div class="t" style="left:736px;top:127px;font-size:7.500px;color:#222;font-weight:400">计算结果</div>
<div class="t rb" style="left:711px;top:142px;font-size:7.500px">透镜后</div>
<div class="a" style="left:706.2px;top:156.4px;width:212.6px;height:202.4px;background:#f0f0f0;border:1px solid #6e6e6e;overflow:hidden">
<div class="a" style="left:0;top:0;width:212.5999999999999px;height:156.20px;background:#fff"></div>
<div class="t rb" style="left:4.5px;top:2.6px;font-size:7.500px">名称</div>
<div class="t rb" style="left:74.5px;top:2.6px;font-size:7.500px">单位</div>
<div class="t rb" style="left:143.8px;top:2.6px;font-size:7.500px">数据</div>
<div class="a" style="left:0;top:12.20px;width:212.5999999999999px;height:1px;background:#c8c8c8"></div>
<div class="a" style="left:0;top:23.20px;width:212.5999999999999px;height:1px;background:#c8c8c8"></div>
<div class="a" style="left:0;top:34.20px;width:212.5999999999999px;height:1px;background:#c8c8c8"></div>
<div class="a" style="left:0;top:45.20px;width:212.5999999999999px;height:1px;background:#c8c8c8"></div>
<div class="a" style="left:0;top:56.20px;width:212.5999999999999px;height:1px;background:#c8c8c8"></div>
<div class="a" style="left:0;top:67.20px;width:212.5999999999999px;height:1px;background:#c8c8c8"></div>
<div class="a" style="left:0;top:78.20px;width:212.5999999999999px;height:1px;background:#c8c8c8"></div>
<div class="a" style="left:0;top:89.20px;width:212.5999999999999px;height:1px;background:#c8c8c8"></div>
<div class="a" style="left:0;top:100.20px;width:212.5999999999999px;height:1px;background:#c8c8c8"></div>
<div class="a" style="left:0;top:111.20px;width:212.5999999999999px;height:1px;background:#c8c8c8"></div>
<div class="a" style="left:0;top:122.20px;width:212.5999999999999px;height:1px;background:#c8c8c8"></div>
<div class="a" style="left:0;top:133.20px;width:212.5999999999999px;height:1px;background:#c8c8c8"></div>
<div class="a" style="left:0;top:144.20px;width:212.5999999999999px;height:1px;background:#c8c8c8"></div>
<div class="a" style="left:0;top:155.20px;width:212.5999999999999px;height:1px;background:#c8c8c8"></div>
<div class="a" style="left:70.5px;top:0;width:1px;height:156.20px;background:#d0d0d0"></div>
<div class="a" style="left:140.3px;top:0;width:1px;height:156.20px;background:#d0d0d0"></div>
<div class="a" style="left:0;top:12.7px;width:70.5px;height:11.00px;background:#0a78d7"></div>
<div class="t rc" style="left:1.500px;top:14.80px;color:#fff">焦点位置<span class="rl">X</span></div>
<div class="t rm" style="left:73.0px;top:15.40px">mm</div>
<div class="t rm" style="left:142.3px;top:15.40px">417.2464</div>
<div class="t rc" style="left:1.500px;top:25.80px;color:#111">焦点大小<span class="rl">X</span></div>
<div class="t rm" style="left:73.0px;top:26.40px">mm</div>
<div class="t rm" style="left:142.3px;top:26.40px">0.1981</div>
<div class="t rc" style="left:1.500px;top:36.80px;color:#111">发散角<span class="rl">X</span></div>
<div class="t rm" style="left:73.0px;top:37.40px">mrad</div>
<div class="t rm" style="left:142.3px;top:37.40px">8.5972</div>
<div class="t rc" style="left:1.500px;top:47.80px;color:#111">瑞利长度<span class="rl">X</span></div>
<div class="t rm" style="left:73.0px;top:48.40px">mm</div>
<div class="t rm" style="left:142.3px;top:48.40px">23.0479</div>
<div class="t rc" style="left:1.500px;top:58.80px;color:#111">光束质量<span class="rl">M</span>方<span class="rl">X</span></div>
<div class="t rm" style="left:142.3px;top:59.40px">1.0213</div>
<div class="t rc" style="left:1.500px;top:69.80px;color:#111"><span class="rl">BPP-X</span></div>
<div class="t rm" style="left:73.0px;top:70.40px">mm*mrad</div>
<div class="t rm" style="left:142.3px;top:70.40px">0.4259</div>
<div class="t rc" style="left:1.500px;top:80.80px;color:#111">焦点位置<span class="rl">Y</span></div>
<div class="t rm" style="left:73.0px;top:81.40px">mm</div>
<div class="t rm" style="left:142.3px;top:81.40px">417.0670</div>
<div class="t rc" style="left:1.500px;top:91.80px;color:#111">焦点大小<span class="rl">Y</span></div>
<div class="t rm" style="left:73.0px;top:92.40px">mm</div>
<div class="t rm" style="left:142.3px;top:92.40px">0.1966</div>
<div class="t rc" style="left:1.500px;top:102.80px;color:#111">发散角<span class="rl">Y</span></div>
<div class="t rm" style="left:73.0px;top:103.40px">mrad</div>
<div class="t rm" style="left:142.3px;top:103.40px">8.5779</div>
<div class="t rc" style="left:1.500px;top:113.80px;color:#111">瑞利长度<span class="rl">Y</span></div>
<div class="t rm" style="left:73.0px;top:114.40px">mm</div>
<div class="t rm" style="left:142.3px;top:114.40px">22.9161</div>
<div class="t rc" style="left:1.500px;top:124.80px;color:#111">光束质量<span class="rl">M</span>方<span class="rl">Y</span></div>
<div class="t rm" style="left:142.3px;top:125.40px">1.0109</div>
<div class="t rc" style="left:1.500px;top:135.80px;color:#111">像散</div>
<div class="t rm" style="left:73.0px;top:136.40px">mm</div>
<div class="t rm" style="left:142.3px;top:136.40px">0.1794</div>
<div class="t rc" style="left:1.500px;top:146.80px;color:#111"><span class="rl">BPP-Y</span></div>
<div class="t rm" style="left:73.0px;top:147.40px">mm*mrad</div>
<div class="t rm" style="left:142.3px;top:147.40px">0.4215</div>
</div>
<div class="t rb" style="left:709.500px;top:371px;font-size:7.500px">透镜前</div>
<div class="a" style="left:706.2px;top:379.2px;width:202.4px;height:149.8px;background:#f0f0f0;border:1px solid #6e6e6e;overflow:hidden">
<div class="a" style="left:0;top:0;width:202.39999999999998px;height:116.05px;background:#fff"></div>
<div class="t rb" style="left:4.5px;top:2.5px;font-size:7.500px">名称</div>
<div class="t rb" style="left:70.5px;top:2.5px;font-size:7.500px">单位</div>
<div class="t rb" style="left:137.3px;top:2.5px;font-size:7.500px">数据</div>
<div class="a" style="left:0;top:12.00px;width:202.39999999999998px;height:1px;background:#c8c8c8"></div>
<div class="a" style="left:0;top:23.45px;width:202.39999999999998px;height:1px;background:#c8c8c8"></div>
<div class="a" style="left:0;top:34.90px;width:202.39999999999998px;height:1px;background:#c8c8c8"></div>
<div class="a" style="left:0;top:46.35px;width:202.39999999999998px;height:1px;background:#c8c8c8"></div>
<div class="a" style="left:0;top:57.80px;width:202.39999999999998px;height:1px;background:#c8c8c8"></div>
<div class="a" style="left:0;top:69.25px;width:202.39999999999998px;height:1px;background:#c8c8c8"></div>
<div class="a" style="left:0;top:80.70px;width:202.39999999999998px;height:1px;background:#c8c8c8"></div>
<div class="a" style="left:0;top:92.15px;width:202.39999999999998px;height:1px;background:#c8c8c8"></div>
<div class="a" style="left:0;top:103.60px;width:202.39999999999998px;height:1px;background:#c8c8c8"></div>
<div class="a" style="left:0;top:115.05px;width:202.39999999999998px;height:1px;background:#c8c8c8"></div>
<div class="a" style="left:66.5px;top:0;width:1px;height:116.05px;background:#d0d0d0"></div>
<div class="a" style="left:133.8px;top:0;width:1px;height:116.05px;background:#d0d0d0"></div>
<div class="a" style="left:0;top:12.5px;width:66.5px;height:11.45px;background:#0a78d7"></div>
<div class="t rc" style="left:1.500px;top:14.60px;color:#fff">焦点位置<span class="rl">X</span></div>
<div class="t rm" style="left:69.0px;top:15.20px">mm</div>
<div class="t rm" style="left:135.8px;top:15.20px">1039.0552</div>
<div class="t rc" style="left:1.500px;top:26.05px;color:#111">焦点大小<span class="rl">X</span></div>
<div class="t rm" style="left:69.0px;top:26.65px">mm</div>
<div class="t rm" style="left:135.8px;top:26.65px">0.4975</div>
<div class="t rc" style="left:1.500px;top:37.50px;color:#111">发散角<span class="rl">X</span></div>
<div class="t rm" style="left:69.0px;top:38.10px">mrad</div>
<div class="t rm" style="left:135.8px;top:38.10px">3.4243</div>
<div class="t rc" style="left:1.500px;top:48.95px;color:#111">瑞利长度<span class="rl">X</span></div>
<div class="t rm" style="left:69.0px;top:49.55px">mm</div>
<div class="t rm" style="left:135.8px;top:49.55px">145.2811</div>
<div class="t rc" style="left:1.500px;top:60.40px;color:#111">焦点位置<span class="rl">Y</span></div>
<div class="t rm" style="left:69.0px;top:61.00px">mm</div>
<div class="t rm" style="left:135.8px;top:61.00px">1039.3689</div>
<div class="t rc" style="left:1.500px;top:71.85px;color:#111">焦点大小<span class="rl">Y</span></div>
<div class="t rm" style="left:69.0px;top:72.45px">mm</div>
<div class="t rm" style="left:135.8px;top:72.45px">0.4936</div>
<div class="t rc" style="left:1.500px;top:83.30px;color:#111">发散角<span class="rl">Y</span></div>
<div class="t rm" style="left:69.0px;top:83.90px">mrad</div>
<div class="t rm" style="left:135.8px;top:83.90px">3.4158</div>
<div class="t rc" style="left:1.500px;top:94.75px;color:#111">瑞利长度<span class="rl">Y</span></div>
<div class="t rm" style="left:69.0px;top:95.35px">mm</div>
<div class="t rm" style="left:135.8px;top:95.35px">144.5117</div>
</div>
<div class="a" style="left:705px;top:528px;width:206px;height:2px;background:#fafafa"></div>
<div class="a" style="left:912.400px;top:374px;width:2.800px;height:136px;background:#808080"></div>
<div class="a" style="left:707.300px;top:548px;width:8px;height:8.800px;background:#0a64c8;border-radius:1.500px"></div>
<svg class="a" style="left:708.300px;top:550px" width="6" height="5" viewBox="0 0 6 5"><path d="M0.800 2.500l1.500 1.500l2.800-3" stroke="#fff" stroke-width="0.900" fill="none"/></svg>
<div class="t" style="left:718.500px;top:549px;font-size:7px;font-weight:400">权重</div>
<div class="btn" style="left:738px;top:544px;width:35px;height:15.500px;line-height:13.500px;font-size:7.500px"><b>计算</b></div>
<div class="btn" style="left:778.500px;top:544px;width:35px;height:15.500px;line-height:13.500px;font-size:7.500px"><b>清空</b></div>
<div class="btn" style="left:817.500px;top:544px;width:44px;height:15.500px;line-height:13.500px;font-size:7.500px"><b>保存配置</b></div>

<!-- STATUS -->
<div class="a" style="left:0;top:569.500px;width:923px;height:17.500px;background:#0a64c8"></div>
<div class="a" style="left:0;top:587px;width:923px;height:4px;background:#dcdcdc"></div>
<div class="t" style="left:3px;top:574px;font-size:7px;color:#fff">-</div>
<div class="a" style="left:71.500px;top:571.500px;width:239.500px;height:13.500px;background:#fff"></div>
<div class="t st" style="left:73px;top:575px;color:#222">M: 0.0355 R: 1.7762 N: 5.00 LR: 22.76% <span style="font-family:'Noto Sans CJK SC',sans-serif;font-size:7px;letter-spacing:0">温度</span>: 27</div>
<div class="t sc" style="left:342.500px;top:574.500px">显示速度:</div>
<div class="t st" style="left:392px;top:575px;color:#b8d4f0">25</div>
<div class="t st" style="left:413px;top:575px;color:#b8d4f0">FPS</div>
<div class="t sc" style="left:471.500px;top:574.500px">采集速度:</div>
<div class="t st" style="left:520px;top:575px;color:#b8d4f0">--</div>
<div class="t st" style="left:552px;top:575px;color:#b8d4f0">FPS</div>
<div class="a" style="left:759.800px;top:570px;width:44px;height:17px;background:#f00"></div>
<div class="a" style="left:819.500px;top:570px;width:43.500px;height:17px;background:#f00"></div>
<div class="a" style="left:878.500px;top:570px;width:44.500px;height:17px;background:#f00"></div>
<div class="t sr" style="left:765px;top:575px"><span class="rl">Smear</span>校准</div>
<div class="t sr" style="left:826px;top:575px">背景扣除</div>
<div class="t sr" style="left:883px;top:575px"><span class="rl">BaseLine</span></div>
<div class="a" style="left:922.200px;top:16px;width:0.800px;height:575px;background:#fafafa"></div>
<div class="a" style="left:921.300px;top:105.800px;width:0.900px;height:18px;background:#0a1a90"></div>

</body></html>
